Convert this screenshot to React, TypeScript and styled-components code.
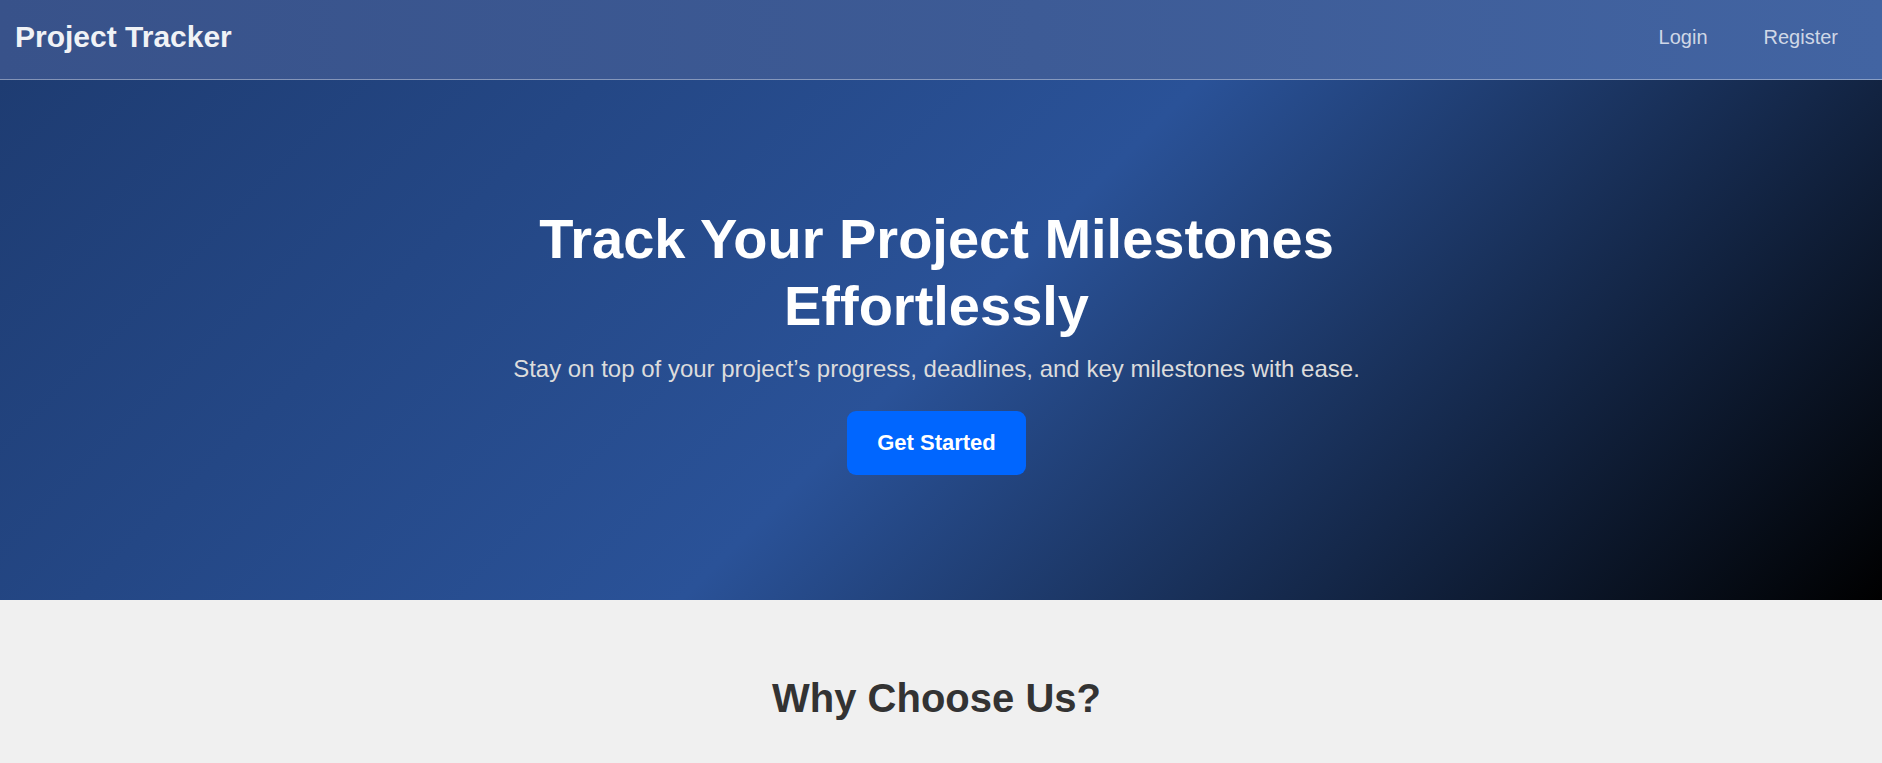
import React from "react";
import styled, { createGlobalStyle } from "styled-components";

const GlobalStyle = createGlobalStyle`
  * { box-sizing: border-box; }
  html, body { margin: 0; padding: 0; }
  body {
    font-family: "Liberation Sans", Arial, sans-serif;
    background: #f0f0f0;
    color: #333;
  }
`;

const Header = styled.header`
  height: 80px;
  display: flex;
  align-items: center;
  justify-content: space-between;
  padding: 0 24px 5px 15px;
  background: linear-gradient(90deg, #38528a 0%, #3d5b96 55%, #4264a2 100%);
  border-bottom: 1px solid rgba(255, 255, 255, 0.38);
`;

const Logo = styled.h1`
  margin: 0;
  font-size: 30px;
  font-weight: 700;
  color: #f0f2f6;
`;

const Nav = styled.nav`
  display: flex;
  align-items: center;
  gap: 16px;
`;

const NavLink = styled.a`
  padding: 8px 20px;
  font-size: 20px;
  color: rgba(255, 255, 255, 0.76);
  text-decoration: none;
  cursor: pointer;
`;

const Hero = styled.section`
  height: 520px;
  display: flex;
  flex-direction: column;
  align-items: center;
  justify-content: center;
  text-align: center;
  padding: 0 29px 0 20px;
  background: linear-gradient(135deg, #1e3c72 0%, #2a5298 50%, #000000 100%);
`;

const HeroInner = styled.div`
  max-width: 900px;
  display: flex;
  flex-direction: column;
  align-items: center;
`;

const HeroTitle = styled.h2`
  margin: 0 0 16px;
  font-size: 56px;
  line-height: 1.2;
  font-weight: 700;
  color: #ffffff;
  max-width: 820px;
`;

const HeroText = styled.p`
  margin: 0 0 28px;
  font-size: 24px;
  color: #dcdcdc;
`;

const CtaButton = styled.button`
  font-family: inherit;
  font-size: 22px;
  font-weight: 700;
  color: #ffffff;
  background: #0066ff;
  border: none;
  border-radius: 9px;
  padding: 19px 30px;
  cursor: pointer;
`;

const Features = styled.section`
  background: #f0f0f0;
  padding: 76px 29px 60px 20px;
  text-align: center;
`;

const SectionTitle = styled.h2`
  margin: 0;
  font-size: 40px;
  font-weight: 700;
  color: #333333;
`;

export default function App() {
  return (
    <>
      <GlobalStyle />
      <Header>
        <Logo>Project Tracker</Logo>
        <Nav>
          <NavLink>Login</NavLink>
          <NavLink>Register</NavLink>
        </Nav>
      </Header>
      <Hero>
        <HeroInner>
          <HeroTitle>Track Your Project Milestones Effortlessly</HeroTitle>
          <HeroText>
            Stay on top of your project’s progress, deadlines, and key milestones with ease.
          </HeroText>
          <CtaButton>Get Started</CtaButton>
        </HeroInner>
      </Hero>
      <Features>
        <SectionTitle>Why Choose Us?</SectionTitle>
      </Features>
    </>
  );
}
